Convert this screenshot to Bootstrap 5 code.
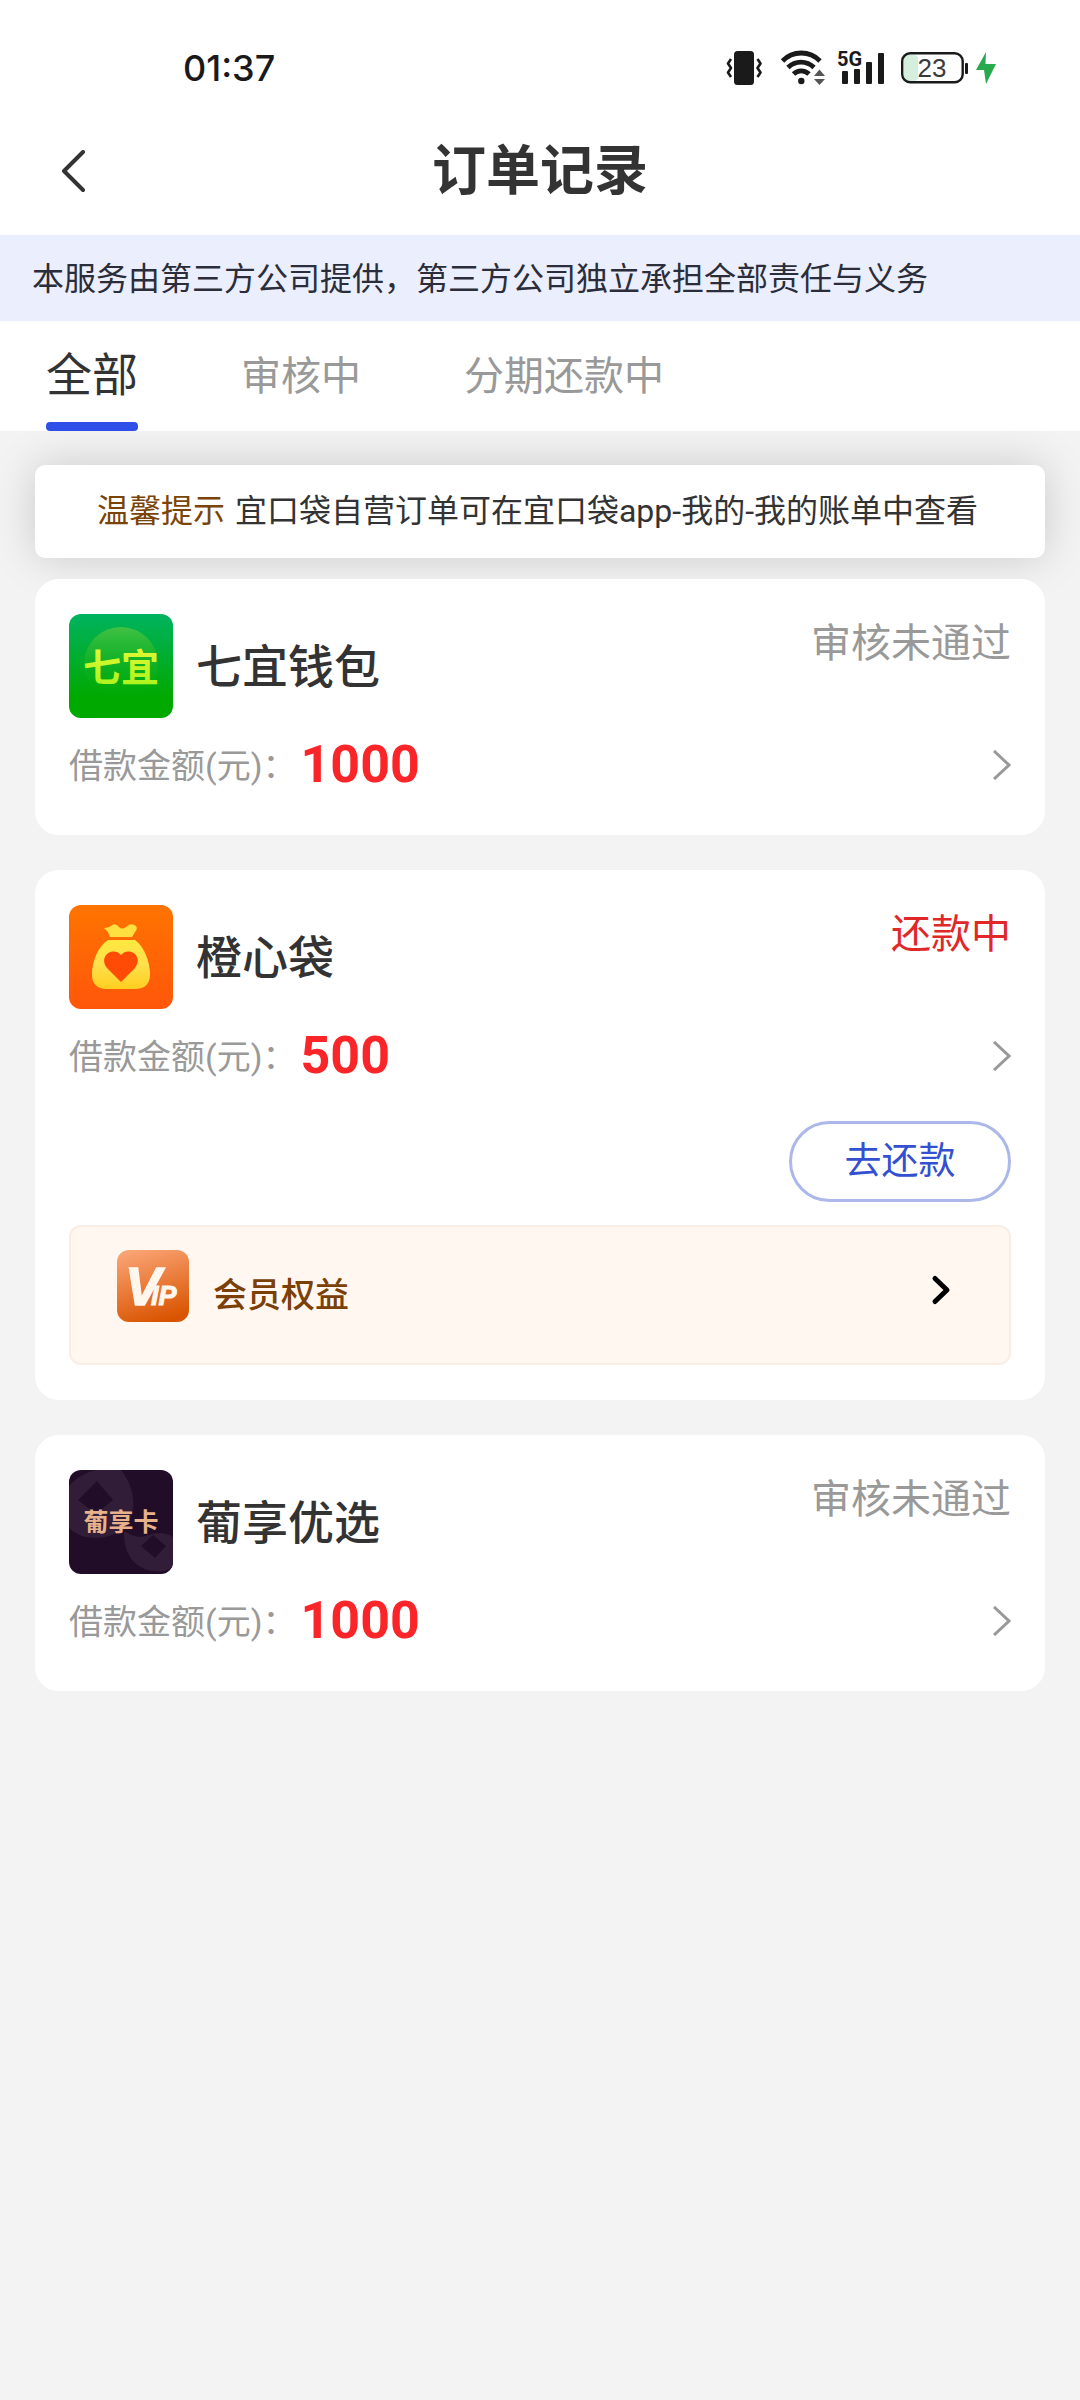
<!DOCTYPE html>
<html lang="zh-CN">
<head>
<meta charset="utf-8">
<meta name="viewport" content="width=device-width, initial-scale=1">
<title>订单记录</title>
<link href="https://cdn.jsdelivr.net/npm/bootstrap@5.3.0/dist/css/bootstrap.min.css" rel="stylesheet">
<style>
body{background:#f3f3f3;color:#333;font-family:Roboto,"Noto Sans CJK SC",sans-serif}
.statusbar{height:104px;padding:32px 84px 0 183px;color:#1a1a1a}
.clock{font:500 36px/72px Inter,sans-serif}
.titlebar{height:131px;padding:4px 58px 0}
.titlebar h1{font-size:54px;line-height:72px;font-weight:700}
.side{width:40px}
.notice{background:#ebeefd;padding:2px 32px 0;font-size:32px;line-height:84px;color:#2b2d3a}
.tabs{height:110px;padding:0 46px;gap:103px}
.tabs .nav-link{padding:0;font-size:40px;line-height:112px;color:#999;border:0;border-radius:0}
.tabs .nav-link.active{font-size:46px;line-height:108px;color:#333;position:relative;background:none}
.tabs .nav-link.active::after{content:"";position:absolute;left:0;right:0;bottom:0;height:9px;border-radius:4px;background:#2f50e8}
.page-body{padding:34px 35px}
.tip{background:#fff;border-radius:10px;box-shadow:0 0 44px rgba(0,0,0,.17);font-size:32px;line-height:93px;color:#333;margin-bottom:21px;padding:0 62px}
.tip b{font-weight:400;color:#7a4408;margin-right:2px}
.orders{gap:35px}
.order{position:relative;border:0;border-radius:24px;padding:35px 34px;background:#fff;color:#333}
.logo{width:104px;height:104px;border-radius:12px}
.order h2{font-size:46px;line-height:106px;font-weight:500;margin:0 0 -2px 23px}
.state{font-size:40px;line-height:60px;color:#999}
.state.due{color:#e02828}
.detail{height:70px;margin-top:12px;text-decoration:none}
.caption-text{font-size:34px;line-height:66px;padding-top:2px;margin-right:4px;color:#999}
.sum{font-size:52px;font-weight:700;color:#fa2528}
.pay{width:222px;height:81px;margin-top:30px;border:3px solid #adb8ea;color:#3350d0;font-size:37px;line-height:1;padding:0}
.vip{margin-top:23px;height:140px;border:2px solid #f9ede4;border-radius:12px;background:#fff7f0;padding:23px 55px 0 46px;color:#7a4008;text-decoration:none}
.vip span{font-size:34px;line-height:90px;font-weight:500;margin-left:24px}
</style>
</head>
<body>
<header class="bg-white">
  <div class="statusbar d-flex align-items-center justify-content-between">
    <span class="clock">01:37</span>
    <div class="d-flex align-items-center">
      <svg width="36" height="34" viewBox="0 0 36 34" fill="none" stroke="#1a1a1a" stroke-width="2.6" stroke-linejoin="round"><rect x="8" y="0" width="20" height="34" rx="3.5" fill="#1a1a1a" stroke="none"/><path d="M5 8 2 12.500 5 17 2 21.500 5 26M31.500 8l3 4.500-3 4.500 3 4.500-3 4.500"/></svg>
      <svg class="ms-3" width="47" height="36" viewBox="-3 0 47 36" fill="none" stroke="#1a1a1a" stroke-width="4.800"><path d="M1.500 11a26 26 0 0 1 37.500 0M7 17.500a18.500 18.500 0 0 1 26 0M12.500 24a11 11 0 0 1 15.500 0"/><circle cx="20.300" cy="31" r="3.200" fill="#1a1a1a" stroke="none"/><path d="m33 26 5.500-6.500L44 26zM33 29h11l-5.500 6z" fill="#555" stroke="none"/></svg>
      <svg class="ms-2" width="52" height="48" viewBox="-5 -6 52 48" fill="#1a1a1a"><text x="-1" y="16" font-family="Roboto" font-weight="700" font-size="20">5G</text><rect x="4" y="21" width="6" height="13" rx="1"/><rect x="16" y="19" width="6" height="15" rx="1"/><rect x="28" y="12" width="6" height="22" rx="1"/><rect x="40" y="3" width="6" height="31" rx="1"/></svg>
      <svg class="ms-3" width="67" height="32" viewBox="0 0 67 32"><rect x="3" y="3" width="14" height="26" rx="4" fill="#d5eedd"/><rect x="1.200" y="1.200" width="60.500" height="29" rx="8" fill="none" stroke="#1a1a1a" stroke-width="2.400"/><rect x="64" y="11" width="3" height="11" rx="1" fill="#1a1a1a"/><text x="31" y="25" text-anchor="middle" font-family="Liberation Sans" font-size="26" fill="#3a3a3a">23</text></svg>
      <svg class="ms-2" width="20" height="32" viewBox="0 0 20 32"><path d="M10 0 0 18h8L10 32 20 12H9.500z" fill="#28ab4e"/></svg>
    </div>
  </div>
  <div class="titlebar d-flex align-items-center justify-content-between">
    <a class="side" href="#" aria-label="返回"><svg width="30" height="44" viewBox="0 0 30 44" fill="none" stroke="#333" stroke-width="4" stroke-linecap="round" stroke-linejoin="round"><path d="M25 2 6 21l19 19"/></svg></a>
    <h1 class="m-0">订单记录</h1>
    <div class="side"></div>
  </div>
</header>
<div class="notice">本服务由第三方公司提供，第三方公司独立承担全部责任与义务</div>
<nav class="nav tabs bg-white flex-nowrap align-items-stretch">
  <a class="nav-link active" href="#">全部</a>
  <a class="nav-link" href="#">审核中</a>
  <a class="nav-link" href="#">分期还款中</a>
</nav>
<main class="page-body">
  <div class="tip"><b>温馨提示</b> 宜口袋自营订单可在宜口袋app-我的-我的账单中查看</div>
  <div class="orders d-flex flex-column">
    <article class="order">
      <div class="d-flex align-items-start">
        <svg class="logo" viewBox="0 0 104 104"><defs><linearGradient id="g1" x2="0" y2="1"><stop stop-color="#00b35f"/><stop offset=".8" stop-color="#00a900"/></linearGradient><linearGradient id="g2" x2="0" y2="1"><stop stop-color="#4dc441" stop-opacity=".85"/><stop offset="1" stop-color="#00a900" stop-opacity="0"/></linearGradient><linearGradient id="g3" x2="0" y2="1"><stop stop-color="#f2fb3a"/><stop offset="1" stop-color="#a2f21a"/></linearGradient></defs><rect width="104" height="104" fill="url(#g1)"/><circle cx="52" cy="50" r="37" fill="url(#g2)"/><text x="52" y="67" text-anchor="middle" font-family="Noto Sans CJK SC" font-weight="700" font-size="38" fill="url(#g3)">七宜</text></svg>
        <h2>七宜钱包</h2>
        <span class="state ms-auto">审核未通过</span>
      </div>
      <a class="detail d-flex align-items-center" href="#"><span class="caption-text">借款金额(元)：</span><span class="sum">1000</span>
        <svg class="ms-auto" width="18" height="30" viewBox="0 0 18 30" fill="none" stroke="#999" stroke-width="3"><path d="M1 1l15 14L1 29"/></svg></a>
    </article>
    <article class="order">
      <div class="d-flex align-items-start">
        <svg class="logo" viewBox="0 0 104 104"><defs><linearGradient id="o1" x2="0" y2="1"><stop stop-color="#ff7400"/><stop offset="1" stop-color="#ff560b"/></linearGradient><linearGradient id="o2" x2="0" y2="1"><stop stop-color="#ffe83e"/><stop offset=".5" stop-color="#ffe04d"/><stop offset="1" stop-color="#ffce20"/></linearGradient></defs><rect width="104" height="104" fill="url(#o1)"/><path d="M35 23q4 0 7-2 4-4 8 1 3 3 7 0 5-5 10-1 2 3-1 6l-3 5H41l-2-5z" fill="#ffe040"/><path d="M39 35h27C75 41 81 57 81 69q0 15-15 15H38q-15 0-15-15c0-12 6-28 16-34z" fill="url(#o2)"/><path d="M52 77 38 63c-9-12 6-22 14-13 8-9 23 1 14 13z" fill="#ff4b05"/></svg>
        <h2>橙心袋</h2>
        <span class="state due ms-auto">还款中</span>
      </div>
      <a class="detail d-flex align-items-center" href="#"><span class="caption-text">借款金额(元)：</span><span class="sum">500</span>
        <svg class="ms-auto" width="18" height="30" viewBox="0 0 18 30" fill="none" stroke="#999" stroke-width="3"><path d="M1 1l15 14L1 29"/></svg></a>
      <div class="d-flex justify-content-end"><button class="btn pay rounded-pill" type="button">去还款</button></div>
      <a class="vip d-flex align-items-start" href="#">
        <svg width="72" height="72" viewBox="0 0 72 72"><defs><linearGradient id="v1" x1=".3" x2=".6" y2="1"><stop stop-color="#f9a272"/><stop offset="1" stop-color="#d95400"/></linearGradient></defs><rect width="72" height="72" rx="12" fill="url(#v1)"/><text x="8" y="55" font-family="Liberation Sans" font-style="italic" font-weight="700" font-size="54" fill="#fff7ee" stroke="#fff7ee" stroke-width="1.500">V<tspan dx="-10" font-size="27" stroke-width="1">IP</tspan></text></svg>
        <span>会员权益</span>
        <svg class="ms-auto" width="24" height="80" viewBox="0 0 24 80" fill="none" stroke="#000" stroke-width="5" stroke-linecap="round" stroke-linejoin="round"><path d="M5 28.500 17 40 5 51.500"/></svg>
      </a>
    </article>
    <article class="order">
      <div class="d-flex align-items-start">
        <svg class="logo" viewBox="0 0 104 104"><rect width="104" height="104" fill="#220d28"/><path fill-rule="evenodd" fill="#321d38" d="M0 16Q15 0 32 0h20c20 25 18 65-24 68Q10 68 0 58zM28 11 9 30l18 14 17-14zM57 62q12 8 22 3 14-5 25 2v31c-22 10-50-2-49-36zM84 65 72 76l14 12 11-12z"/><text x="52" y="61" text-anchor="middle" font-family="Noto Sans CJK SC" font-weight="700" font-size="25" fill="#e7b18c">葡享卡</text></svg>
        <h2>葡享优选</h2>
        <span class="state ms-auto">审核未通过</span>
      </div>
      <a class="detail d-flex align-items-center" href="#"><span class="caption-text">借款金额(元)：</span><span class="sum">1000</span>
        <svg class="ms-auto" width="18" height="30" viewBox="0 0 18 30" fill="none" stroke="#999" stroke-width="3"><path d="M1 1l15 14L1 29"/></svg></a>
    </article>
  </div>
</main>
<script src="https://cdn.jsdelivr.net/npm/bootstrap@5.3.0/dist/js/bootstrap.bundle.min.js"></script>
</body>
</html>
